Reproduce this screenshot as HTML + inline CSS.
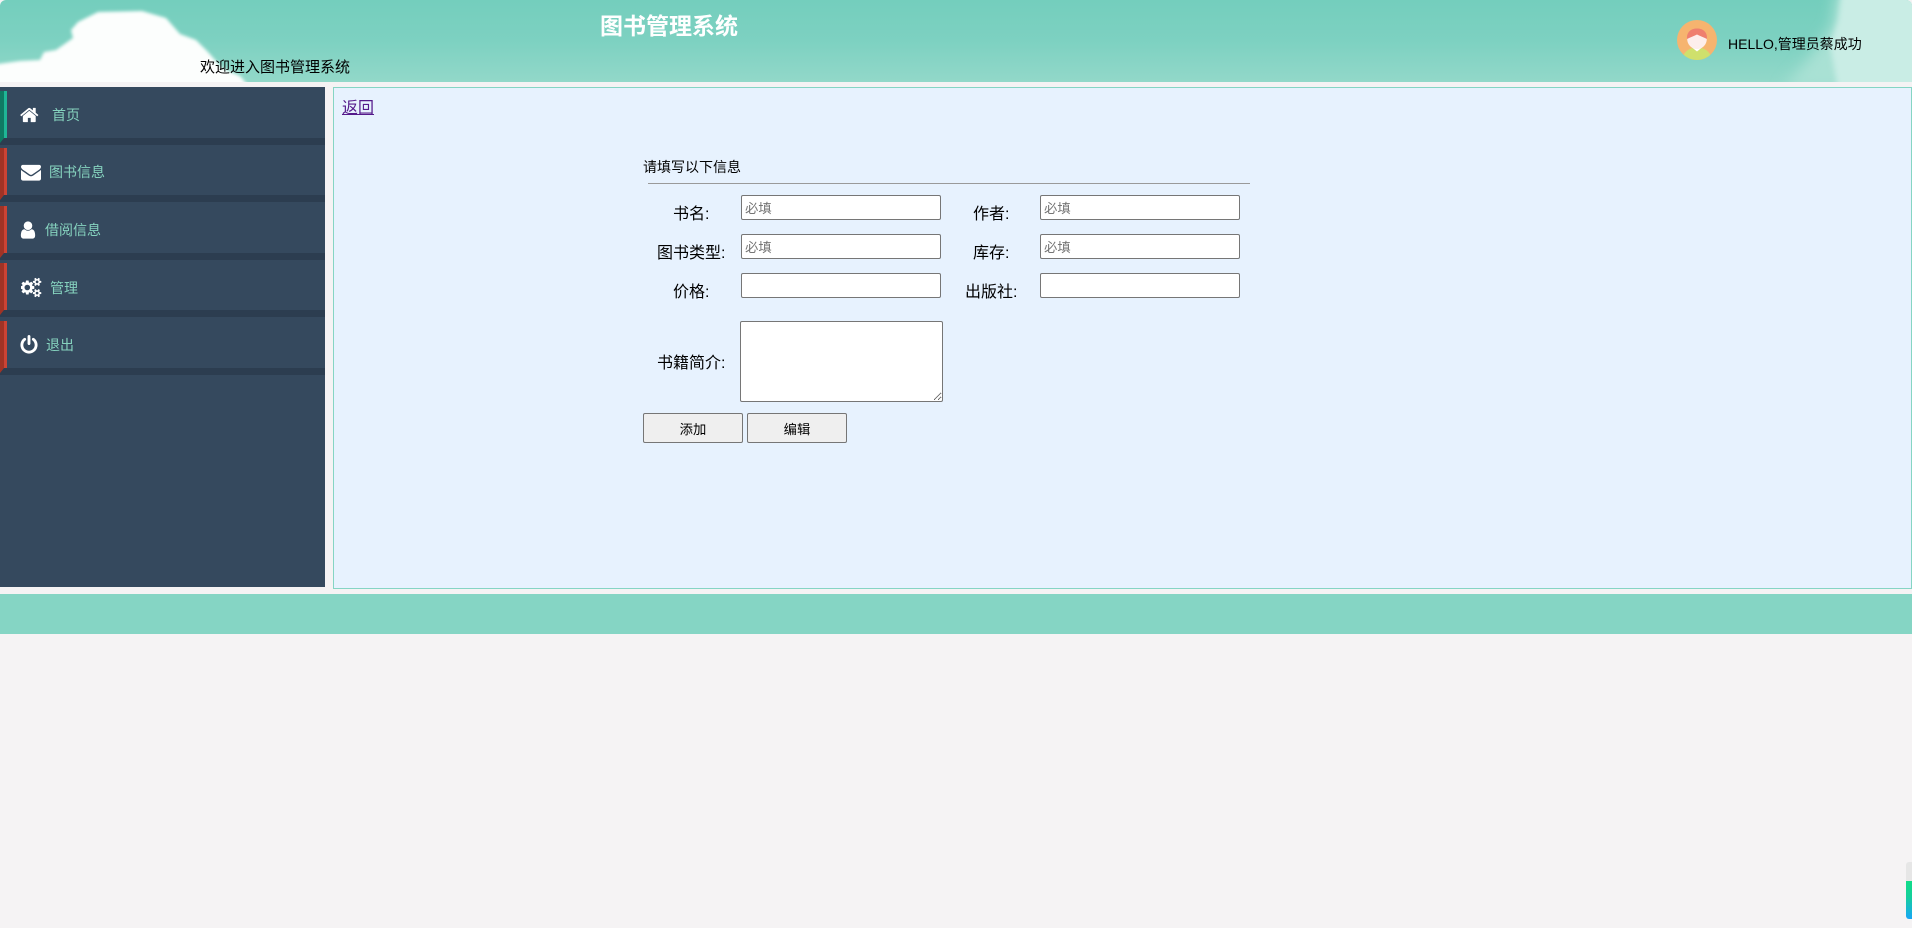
<!DOCTYPE html>
<html lang="zh-CN"><head><meta charset="utf-8"><title>图书管理系统</title>
<style>
*{box-sizing:border-box}
html,body{margin:0;padding:0;width:1912px;height:928px;overflow:hidden;background:#f5f3f4;font-family:"Liberation Sans","Noto Sans CJK SC",sans-serif;color:#000}
.a{position:absolute;white-space:nowrap;line-height:20px}
#hd{position:absolute;left:0;top:0;width:1912px;height:82px;overflow:hidden;border-radius:6px 6px 0 0;background:linear-gradient(180deg,#74cebd 0%,#7dd1c1 50%,#92d8c9 100%)}
#side{position:absolute;left:0;top:87px;width:325px;height:500px;background:#35495e}
.strip{position:absolute;left:0;width:325px;height:7px;background:#2c3d50}
.bar{position:absolute;left:0;width:7px;height:52px;clip-path:polygon(0 0,100% 0,100% 47px,4px 47px,0 100%)}
.bar.g{background:linear-gradient(90deg,#0f7a63 0,#0f7a63 4px,#1fb596 4px)}
.bar.r{background:linear-gradient(90deg,#a03325 0,#a03325 4px,#cb4334 4px)}
.m{font-size:14px;color:#86d3bf}
.i{position:absolute;fill:#fff}
#main{position:absolute;left:333px;top:87px;width:1579px;height:502px;background:#e7f2fe;border:1px solid #85d5c4}
input,textarea,button{position:absolute;margin:0;font-family:"Liberation Sans","Noto Sans CJK SC",sans-serif;font-size:13.33px;border:1px solid #767676;border-radius:2px;background:#fff;padding:1px 2px}
input{padding:2px 3px 0}
input::placeholder{color:#757575}
button{background:#efefef;color:#000;text-align:center;padding:0;width:100px;height:30px}
.l{font-size:16px}
#ft{position:absolute;left:0;top:594px;width:1912px;height:40px;background:#85d5c4}
</style></head><body>
<div id="hd">
<svg width="1912" height="82" style="position:absolute;left:0;top:0">
<defs><filter id="b" x="-20%" y="-20%" width="140%" height="140%"><feGaussianBlur stdDeviation="1.6"/></filter><filter id="c" x="-30%" y="-30%" width="160%" height="160%"><feGaussianBlur stdDeviation="7"/></filter><filter id="d" x="-30%" y="-30%" width="160%" height="160%"><feGaussianBlur stdDeviation="3"/></filter></defs>
<path d="M-10 90V65L20 61 40 60 44 52 56 50 73 38 71 30 78 22 98 12 142 11 166 18 180 34 196 40 208 52 222 68 240 76 252 90Z" fill="#fcfefd" filter="url(#b)"/>
<path d="M1836 -10L1832 25 1814 52 1782 90H1920V-10Z" fill="#a9e1d4" filter="url(#c)"/>
<path d="M1842 -10L1838 20 1830 45 1838 90H1920V-10Z" fill="#c9ede5" filter="url(#d)"/>
</svg>
<div class="a" style="left:600px;top:13px;font-size:23px;font-weight:bold;color:#fff;line-height:26px">图书管理系统</div>
<div class="a" style="left:200px;top:58px;font-size:15px">欢迎进入图书管理系统</div>
<svg width="40" height="40" viewBox="0 0 40 40" style="position:absolute;left:1677px;top:20px">
<defs><clipPath id="cp"><circle cx="20" cy="20" r="20"/></clipPath></defs>
<circle cx="20" cy="20" r="20" fill="#f6b46f"/>
<g clip-path="url(#cp)"><ellipse cx="20" cy="38" rx="14" ry="10.500" fill="#cfe06c"/>
<path d="M15 27.500h10l-5 4z" fill="#fff"/>
<ellipse cx="20" cy="19" rx="9.800" ry="10" fill="#fdeeec"/>
<path d="M10 19C9.500 12 14 8.500 20 8.500S30.500 12 30 19C27 17.500 23 16 20 14.500 17 16 13 17.500 10 19Z" fill="#ef7f6f"/></g>
</svg>
<div class="a" style="left:1728px;top:34px;font-size:14px">HELLO,管理员蔡成功</div>
</div>

<div id="side"></div>
<div class="strip" style="top:138px"></div><div class="bar g" style="top:91px"></div>
<div class="strip" style="top:195px"></div><div class="bar r" style="top:148px"></div>
<div class="strip" style="top:253px"></div><div class="bar r" style="top:206px"></div>
<div class="strip" style="top:310px"></div><div class="bar r" style="top:263px"></div>
<div class="strip" style="top:368px"></div><div class="bar r" style="top:321px"></div>

<svg class="i" style="left:20px;top:105px" width="20" height="20" viewBox="0 0 1792 1792"><path d="M1408 992v480q0 26-19 45t-45 19h-384v-384h-256v384h-384q-26 0-45-19t-19-45v-480q0-1 .5-3t.5-3l575-474 575 474q1 2 1 6zm223-69l-62 74q-8 9-21 11h-3q-13 0-21-7l-692-577-692 577q-12 8-24 7-13-2-21-11l-62-74q-8-10-7-23.5t11-21.5l719-599q32-26 76-26t76 26l244 204v-195q0-14 9-23t23-9h192q14 0 23 9t9 23v408l219 182q10 8 11 21.5t-7 23.5z"/></svg>
<div class="a m" style="left:52px;top:105px">首页</div>

<svg class="i" style="left:21px;top:162px" width="20" height="20" viewBox="0 0 1792 1792"><path d="M1792 710v794q0 66-47 113t-113 47h-1472q-66 0-113-47t-47-113v-794q44 49 101 87 362 246 497 345 57 42 92.500 65.500t94.500 48 110 24.500h2q51 0 110-24.500t94.500-48 92.500-65.500q170-123 498-345 57-39 100-87zm0-294q0 79-49 151t-122 123q-376 261-468 325-10 7-42.500 30.500t-54 38-52 32.500-57.500 27-50 9h-2q-23 0-50-9t-57.500-27-52-32.500-54-38-42.500-30.500q-91-64-262-182.500t-205-142.500q-62-42-117-115.500t-55-136.500q0-78 41.500-130t118.500-52h1472q65 0 112.500 47t47.500 113z"/></svg>
<div class="a m" style="left:49px;top:162px">图书信息</div>

<svg class="i" style="left:18px;top:220px" width="20" height="20" viewBox="0 0 1792 1792"><path d="M1536 1399q0 109-62.500 187t-150.500 78h-854q-88 0-150.500-78t-62.500-187q0-85 8.500-160.500t31.500-152 58.500-131 94-89 134.500-34.500q131 128 313 128t313-128q76 0 134.500 34.500t94 89 58.500 131 31.500 152 8.500 160.500zm-256-887q0 159-112.500 271.500t-271.500 112.500-271.500-112.500-112.500-271.500 112.500-271.500 271.500-112.500 271.500 112.500 112.500 271.500z"/></svg>
<div class="a m" style="left:45px;top:220px">借阅信息</div>

<svg class="i" style="left:21px;top:277px" width="21" height="21" viewBox="0 0 1920 1792"><path d="M832 896q0-106-75-181t-181-75-181 75-75 181 75 181 181 75 181-75 75-181zm768 512q0-52-38-90t-90-38-90 38-38 90q0 53 37.500 90.500t90.500 37.500 90.500-37.500 37.500-90.500zm0-1024q0-52-38-90t-90-38-90 38-38 90q0 53 37.500 90.500t90.500 37.500 90.500-37.500 37.500-90.500zm-384 421v185q0 10-7 19.500t-16 10.500l-155 24q-11 35-32 76 34 48 90 115 7 11 7 20 0 12-7 19-23 30-82.500 89.500t-78.500 59.500q-11 0-21-7l-115-90q-37 19-77 31-11 108-23 155-7 24-30 24h-186q-11 0-20-7.500t-10-17.500l-23-153q-34-10-75-31l-118 89q-7 7-20 7-11 0-21-8-144-133-144-160 0-9 7-19 10-14 41-53t47-61q-23-44-35-82l-152-24q-10-1-17-9.500t-7-19.500v-185q0-10 7-19.500t16-10.500l155-24q11-35 32-76-34-48-90-115-7-11-7-20 0-12 7-20 22-30 82-89t79-59q11 0 21 7l115 90q34-18 77-32 11-108 23-154 7-24 30-24h186q11 0 20 7.500t10 17.500l23 153q34 10 75 31l118-89q8-7 20-7 11 0 21 8 144 133 144 160 0 8-7 19-12 16-42 54t-45 60q23 48 34 82l152 23q10 2 17 10.500t7 19.500zm640 533v140q0 16-149 31-12 27-30 52 51 113 51 138 0 4-4 7-122 71-124 71-8 0-46-47t-52-68q-20 2-30 2t-30-2q-14 21-52 68t-46 47q-2 0-124-71-4-3-4-7 0-25 51-138-18-25-30-52-149-15-149-31v-140q0-16 149-31 13-29 30-52-51-113-51-138 0-4 4-7 4-2 35-20t59-34 30-16q8 0 46 46.500t52 67.500q20-2 30-2t30 2q51-71 92-112l6-2q4 0 124 70 4 3 4 7 0 25-51 138 17 23 30 52 149 15 149 31zm0-1024v140q0 16-149 31-12 27-30 52 51 113 51 138 0 4-4 7-122 71-124 71-8 0-46-47t-52-68q-20 2-30 2t-30-2q-14 21-52 68t-46 47q-2 0-124-71-4-3-4-7 0-25 51-138-18-25-30-52-149-15-149-31v-140q0-16 149-31 13-29 30-52-51-113-51-138 0-4 4-7 4-2 35-20t59-34 30-16q8 0 46 46.500t52 67.500q20-2 30-2t30 2q51-71 92-112l6-2q4 0 124 70 4 3 4 7 0 25-51 138 17 23 30 52 149 15 149 31z"/></svg>
<div class="a m" style="left:50px;top:278px">管理</div>

<svg class="i" style="left:19px;top:335px" width="20" height="20" viewBox="0 0 1792 1792"><path d="M1664 896q0 156-61 298t-164 245-245 164-298 61-298-61-245-164-164-245-61-298q0-182 80.500-343t226.500-270q43-32 95.500-25t83.500 50q32 42 24.500 94.500t-49.500 84.500q-98 74-151.500 181t-53.500 228q0 104 40.500 198.500t109.500 163.500 163.500 109.500 198.500 40.500 198.500-40.500 163.500-109.500 109.500-163.500 40.500-198.500q0-121-53.500-228t-151.500-181q-42-32-49.500-84.500t24.500-94.500q31-43 84-50t95 25q146 109 226.500 270t80.500 343zm-640-768v640q0 52-38 90t-90 38-90-38-38-90v-640q0-52 38-90t90-38 90 38 38 90z"/></svg>
<div class="a m" style="left:46px;top:335px">退出</div>

<div id="main"></div>
<a class="a" style="left:342px;top:99px;font-size:16px;color:#551a8b;text-decoration:underline">返回</a>
<div class="a" style="left:643px;top:157px;font-size:14px">请填写以下信息</div>
<div style="position:absolute;left:648px;top:183px;width:602px;height:1px;background:#9a9a9a"></div>

<div class="a l" style="left:673px;top:205px">书名:</div>
<input style="left:741px;top:195px;width:200px;height:25px" placeholder="必填">
<div class="a l" style="left:973px;top:205px">作者:</div>
<input style="left:1040px;top:195px;width:200px;height:25px" placeholder="必填">
<div class="a l" style="left:657px;top:244px">图书类型:</div>
<input style="left:741px;top:234px;width:200px;height:25px" placeholder="必填">
<div class="a l" style="left:973px;top:244px">库存:</div>
<input style="left:1040px;top:234px;width:200px;height:25px" placeholder="必填">
<div class="a l" style="left:673px;top:283px">价格:</div>
<input style="left:741px;top:273px;width:200px;height:25px">
<div class="a l" style="left:965px;top:283px">出版社:</div>
<input style="left:1040px;top:273px;width:200px;height:25px">
<div class="a l" style="left:657px;top:354px">书籍简介:</div>
<textarea style="left:740px;top:321px;width:203px;height:81px"></textarea>
<button style="left:643px;top:413px">添加</button>
<button style="left:747px;top:413px">编辑</button>

<div id="ft"></div>
<div style="position:absolute;left:1906px;top:862px;width:6px;height:57px;border-radius:3px 0 0 3px;background:linear-gradient(180deg,#e6e6e6 0,#e6e6e6 19px,#10dc88 19px,#14d09a 60%,#18a6f6 100%)"></div>
</body></html>
